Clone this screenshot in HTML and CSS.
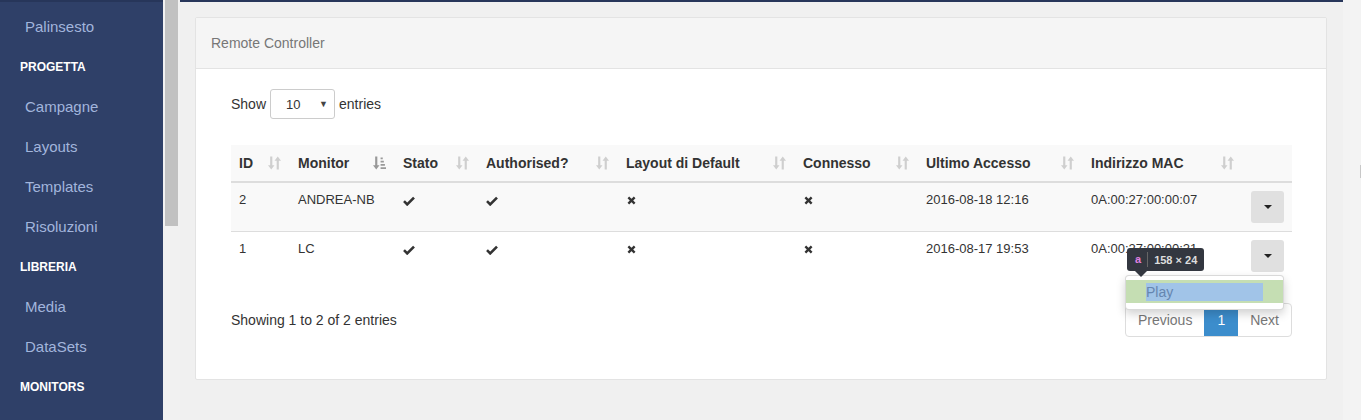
FILE: index.html
```html
<!DOCTYPE html>
<html lang="it">
<head>
    <meta charset="UTF-8">
    <title>Remote Controller</title>
    <link rel="stylesheet" href="styles.css">
</head>
<body>

<!-- Sidebar -->
<nav class="sidebar">
    <a class="nav-item">Palinsesto</a>
    <div class="nav-head">PROGETTA</div>
    <a class="nav-item">Campagne</a>
    <a class="nav-item">Layouts</a>
    <a class="nav-item">Templates</a>
    <a class="nav-item">Risoluzioni</a>
    <div class="nav-head">LIBRERIA</div>
    <a class="nav-item">Media</a>
    <a class="nav-item">DataSets</a>
    <div class="nav-head">MONITORS</div>
</nav>

<!-- Sidebar scrollbar -->
<div class="side-scroll"><div class="side-thumb"></div></div>

<main class="main">
    <div class="panel">
        <div class="panel-heading">Remote Controller</div>
        <div class="panel-body">

            <div class="length">
                Show
                <span class="select"><span>10</span><span class="select-arrow">▼</span></span>
                entries
            </div>

            <table class="grid">
                <colgroup>
                    <col style="width:59px"><col style="width:105px"><col style="width:83px">
                    <col style="width:140px"><col style="width:177px"><col style="width:123px">
                    <col style="width:165px"><col style="width:160px"><col style="width:49px">
                </colgroup>
                <thead>
                    <tr>
                        <th><div class="th"><span>ID</span><svg class="sort" viewBox="0 0 12 14"><path d="M2 1h2v8h2l-3 4-3-4h2zM8 13h2V5h2L9 1 6 5h2z"/></svg></div></th>
                        <th><div class="th"><span>Monitor</span><svg class="sort on" viewBox="0 0 12 14"><path d="M2 1h2v8h2l-3 4-3-4h2zM7 2h2v1.5H7zM7 5h3v1.5H7zM7 8h4v1.5H7zM7 11h5v1.5H7z"/></svg></div></th>
                        <th><div class="th"><span>Stato</span><svg class="sort" viewBox="0 0 12 14"><path d="M2 1h2v8h2l-3 4-3-4h2zM8 13h2V5h2L9 1 6 5h2z"/></svg></div></th>
                        <th><div class="th"><span>Authorised?</span><svg class="sort" viewBox="0 0 12 14"><path d="M2 1h2v8h2l-3 4-3-4h2zM8 13h2V5h2L9 1 6 5h2z"/></svg></div></th>
                        <th><div class="th"><span>Layout di Default</span><svg class="sort" viewBox="0 0 12 14"><path d="M2 1h2v8h2l-3 4-3-4h2zM8 13h2V5h2L9 1 6 5h2z"/></svg></div></th>
                        <th><div class="th"><span>Connesso</span><svg class="sort" viewBox="0 0 12 14"><path d="M2 1h2v8h2l-3 4-3-4h2zM8 13h2V5h2L9 1 6 5h2z"/></svg></div></th>
                        <th><div class="th"><span>Ultimo Accesso</span><svg class="sort" viewBox="0 0 12 14"><path d="M2 1h2v8h2l-3 4-3-4h2zM8 13h2V5h2L9 1 6 5h2z"/></svg></div></th>
                        <th><div class="th"><span>Indirizzo MAC</span><svg class="sort" viewBox="0 0 12 14"><path d="M2 1h2v8h2l-3 4-3-4h2zM8 13h2V5h2L9 1 6 5h2z"/></svg></div></th>
                        <th></th>
                    </tr>
                </thead>
                <tbody>
                    <tr class="odd">
                        <td>2</td>
                        <td>ANDREA-NB</td>
                        <td><svg class="ok" viewBox="0 0 12 10"><path d="M1 5.2l3.2 3.2L11 1.6"/></svg></td>
                        <td><svg class="ok" viewBox="0 0 12 10"><path d="M1 5.2l3.2 3.2L11 1.6"/></svg></td>
                        <td><svg class="no" viewBox="0 0 10 10"><path d="M1.5 1.5l7 7M8.5 1.5l-7 7"/></svg></td>
                        <td><svg class="no" viewBox="0 0 10 10"><path d="M1.5 1.5l7 7M8.5 1.5l-7 7"/></svg></td>
                        <td>2016-08-18 12:16</td>
                        <td>0A:00:27:00:00:07</td>
                        <td><span class="caret-btn"><span class="caret"></span></span></td>
                    </tr>
                    <tr>
                        <td>1</td>
                        <td>LC</td>
                        <td><svg class="ok" viewBox="0 0 12 10"><path d="M1 5.2l3.2 3.2L11 1.6"/></svg></td>
                        <td><svg class="ok" viewBox="0 0 12 10"><path d="M1 5.2l3.2 3.2L11 1.6"/></svg></td>
                        <td><svg class="no" viewBox="0 0 10 10"><path d="M1.5 1.5l7 7M8.5 1.5l-7 7"/></svg></td>
                        <td><svg class="no" viewBox="0 0 10 10"><path d="M1.5 1.5l7 7M8.5 1.5l-7 7"/></svg></td>
                        <td>2016-08-17 19:53</td>
                        <td>0A:00:27:00:00:21</td>
                        <td>
                            <div class="dropdown">
                                <span class="caret-btn"><span class="caret"></span></span>
                                <!-- open menu, with the inspector overlay on it -->
                                <div class="menu">
                                    <div class="inspect-tip"><span class="tag">a</span><span class="size">158 × 24</span></div>
                                    <div class="menu-item"><span>Play</span></div>
                                </div>
                            </div>
                        </td>
                    </tr>
                </tbody>
            </table>

            <div class="table-foot">
                <div class="info">Showing 1 to 2 of 2 entries</div>
                <div class="pager">
                    <span class="page">Previous</span>
                    <span class="page active">1</span>
                    <span class="page">Next</span>
                </div>
            </div>

        </div>
    </div>
</main>

<div class="right-strip"><span class="mark"></span></div>

</body>
</html>
```

FILE: styles.css
```css
* {
    box-sizing: border-box;
}
body {
    margin: 0;
    height: 420px;
    overflow: hidden;
    display: flex;
    font-family: "Liberation Sans", Arial, sans-serif;
    font-size: 14px;
    color: #333;
    background-color: #f0f0f0;
}

/* sidebar */
.sidebar {
    width: 163px;
    flex: none;
    background-color: #2f4068;
    border-top: 2px solid #27365a;
    padding-top: 5px;
}
.nav-item, .nav-head {
    display: block;
    height: 40px;
    line-height: 40px;
}
.nav-item {
    padding-left: 25px;
    font-size: 15px;
    color: #a2b5dc;
}
.nav-head {
    padding-left: 20px;
    font-size: 12px;
    font-weight: bold;
    color: #fff;
}
.side-scroll {
    width: 17px;
    flex: none;
    background-color: #f1f1f1;
    padding: 0 2px;
}
.side-thumb {
    height: 226px;
    background-color: #c1c1c1;
}

/* main area */
.main {
    flex: 1;
    border-top: 2px solid #27365a;
    padding: 15px 16px 0 15px;
}
.right-strip {
    width: 18px;
    flex: none;
    background-color: #f3f3f3;
    padding-top: 165px;
    display: flex;
    justify-content: flex-end;
}
.mark {
    width: 1px;
    height: 13px;
    background-color: #c8c8c8;
}

.panel {
    background: #fff;
    border: 1px solid #e3e3e3;
    border-radius: 2px;
    height: 363px;
}
.panel-heading {
    height: 51px;
    line-height: 50px;
    padding-left: 15px;
    background-color: #f5f5f5;
    border-bottom: 1px solid #e3e3e3;
    color: #777;
}
.panel-body {
    padding: 20px 34px 0 35px;
}

/* length select */
.length {
    display: flex;
    align-items: center;
    gap: 4px;
    height: 30px;
}
.select {
    width: 65px;
    height: 30px;
    border: 1px solid #ccc;
    border-radius: 3px;
    display: flex;
    align-items: center;
    justify-content: space-between;
    padding: 0 6px 0 15px;
    font-size: 13px;
}
.select-arrow {
    font-size: 9px;
    color: #444;
}

/* table */
.grid {
    width: 1061px;
    margin-top: 26px;
    border-collapse: collapse;
    table-layout: fixed;
}
.grid th {
    background-color: #f9f9f9;
    border-bottom: 2px solid #ddd;
    padding: 8px 9px 8px 8px;
    height: 37px;
    text-align: left;
    font-weight: bold;
}
.th {
    display: flex;
    justify-content: space-between;
    align-items: center;
}
.sort {
    width: 13px;
    height: 16px;
    fill: #cfcfcf;
}
.sort.on {
    fill: #999;
}
.grid td {
    padding: 9px 8px 8px 8px;
    height: 49px;
    border-top: 1px solid #ddd;
    vertical-align: top;
    font-size: 13px;
    line-height: 16px;
}
.grid td:last-child {
    padding-top: 8px;
}
.grid tr.odd td {
    background-color: #f9f9f9;
}
.ok, .no {
    fill: none;
    stroke: #333;
    stroke-width: 2.6;
    margin-top: 4px;
}
.ok {
    width: 12px;
    height: 10px;
}
.no {
    width: 9px;
    height: 9px;
    margin-left: 1px;
}
.caret-btn {
    display: flex;
    align-items: center;
    justify-content: center;
    width: 33px;
    height: 32px;
    background-color: #e0e0e0;
    border-radius: 3px;
}
.caret {
    border-left: 4px solid transparent;
    border-right: 4px solid transparent;
    border-top: 4px solid #222;
}

/* dropdown menu, open */
.dropdown {
    position: relative;
}
.menu {
    position: absolute;
    top: 35px;
    right: 0;
    width: 159px;
    background: #fff;
    border: 1px solid rgba(0, 0, 0, 0.15);
    border-radius: 4px;
    box-shadow: 0 4px 10px rgba(0, 0, 0, 0.18);
    padding: 4px 0 6px;
    z-index: 2;
}
.menu-item {
    height: 23px;
    background-color: #c5deb3;
    padding: 3px 20px 0 20px;
}
.menu-item span {
    display: block;
    height: 18px;
    line-height: 18px;
    background-color: #a1c4e8;
    color: #6586b0;
    font-size: 14px;
}
.inspect-tip {
    position: absolute;
    left: 1px;
    top: -28px;
    height: 23px;
    width: 77px;
    background-color: #333740;
    border-radius: 3px;
    display: flex;
    align-items: center;
    font-size: 11px;
    font-weight: bold;
    padding-left: 8px;
}
.inspect-tip::after {
    content: "";
    position: absolute;
    left: 8px;
    bottom: -6px;
    border-left: 6px solid transparent;
    border-right: 6px solid transparent;
    border-top: 6px solid #333740;
}
.tag {
    color: #e080e0;
    padding-right: 6px;
    border-right: 1px solid #666;
    line-height: 15px;
}
.size {
    color: #ddd;
    padding-left: 6px;
}

/* footer */
.table-foot {
    display: flex;
    justify-content: space-between;
    align-items: center;
    margin-top: 22px;
}
.info {
    font-size: 14px;
}
.pager {
    display: flex;
    border: 1px solid #ddd;
    border-radius: 4px;
    height: 34px;
    overflow: hidden;
}
.page {
    line-height: 32px;
    padding: 0 12px;
    color: #777;
}
.page.active {
    background-color: #3c8dcc;
    color: #fff;
    padding: 0 13px;
}
```
